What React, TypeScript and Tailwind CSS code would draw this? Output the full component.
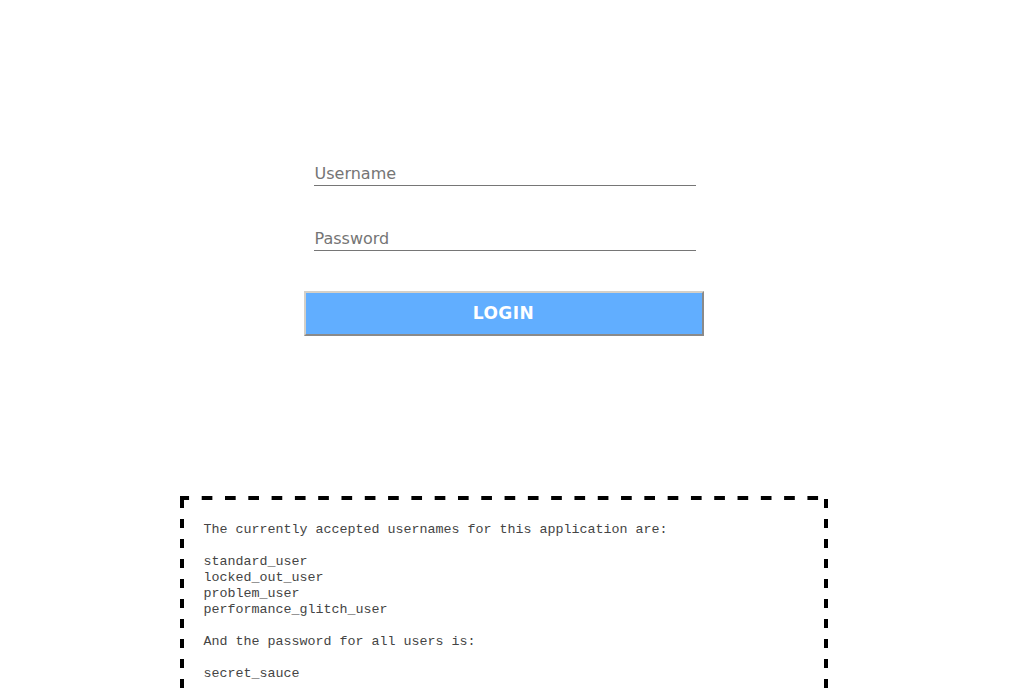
import React from "react";

export default function App() {
  return (
    <div className="w-[1024px] h-[693px] overflow-hidden bg-white">
      <div className="w-[1007px] flex flex-col items-center">
        <div className="h-[163px]" />
        <form className="w-[400px] flex flex-col items-center" onSubmit={(e) => e.preventDefault()}>
          <input
            type="text"
            placeholder="Username"
            className="ml-[2px] w-[382px] h-[23px] border-0 border-b border-[#767676] px-[1px] text-[16px] text-[#333] placeholder:text-[#757575] outline-none"
            style={{ fontFamily: "Tahoma, 'DejaVu Sans', sans-serif" }}
          />
          <div className="h-[42px]" />
          <input
            type="password"
            placeholder="Password"
            className="ml-[2px] w-[382px] h-[23px] border-0 border-b border-[#767676] px-[1px] text-[16px] text-[#333] placeholder:text-[#757575] outline-none"
            style={{ fontFamily: "Tahoma, 'DejaVu Sans', sans-serif" }}
          />
          <div className="h-[40px]" />
          <button
            type="submit"
            className="w-[400px] h-[45px] bg-[#61aeff] border-2 border-t-[#d4d0c8] border-l-[#d4d0c8] border-b-[#8a8a8a] border-r-[#8a8a8a] text-white text-[17px] font-black tracking-[0.5px]"
            style={{ fontFamily: "'Arial Black', 'DejaVu Sans', sans-serif" }}
          >
            LOGIN
          </button>
        </form>
        <div className="h-[160px]" />
        <div
          className="w-[648px] h-[300px] pt-[26px] pl-[24px] text-[13.33px] leading-[16px] text-[#444] [background-image:linear-gradient(90deg,#000_11px,transparent_11px),linear-gradient(#000_9px,transparent_9px),linear-gradient(#000_9px,transparent_9px)] [background-size:23.3px_4px,4px_20px,4px_20px] [background-position:-1.6px_0,0_3px,right_3px] [background-repeat:repeat-x,repeat-y,repeat-y]"
          style={{ fontFamily: "'Liberation Mono', 'Courier New', monospace" }}
        >
          <div>The currently accepted usernames for this application are:</div>
          <div className="h-[16px]" />
          <div>standard_user</div>
          <div>locked_out_user</div>
          <div>problem_user</div>
          <div>performance_glitch_user</div>
          <div className="h-[16px]" />
          <div>And the password for all users is:</div>
          <div className="h-[16px]" />
          <div>secret_sauce</div>
        </div>
      </div>
    </div>
  );
}
